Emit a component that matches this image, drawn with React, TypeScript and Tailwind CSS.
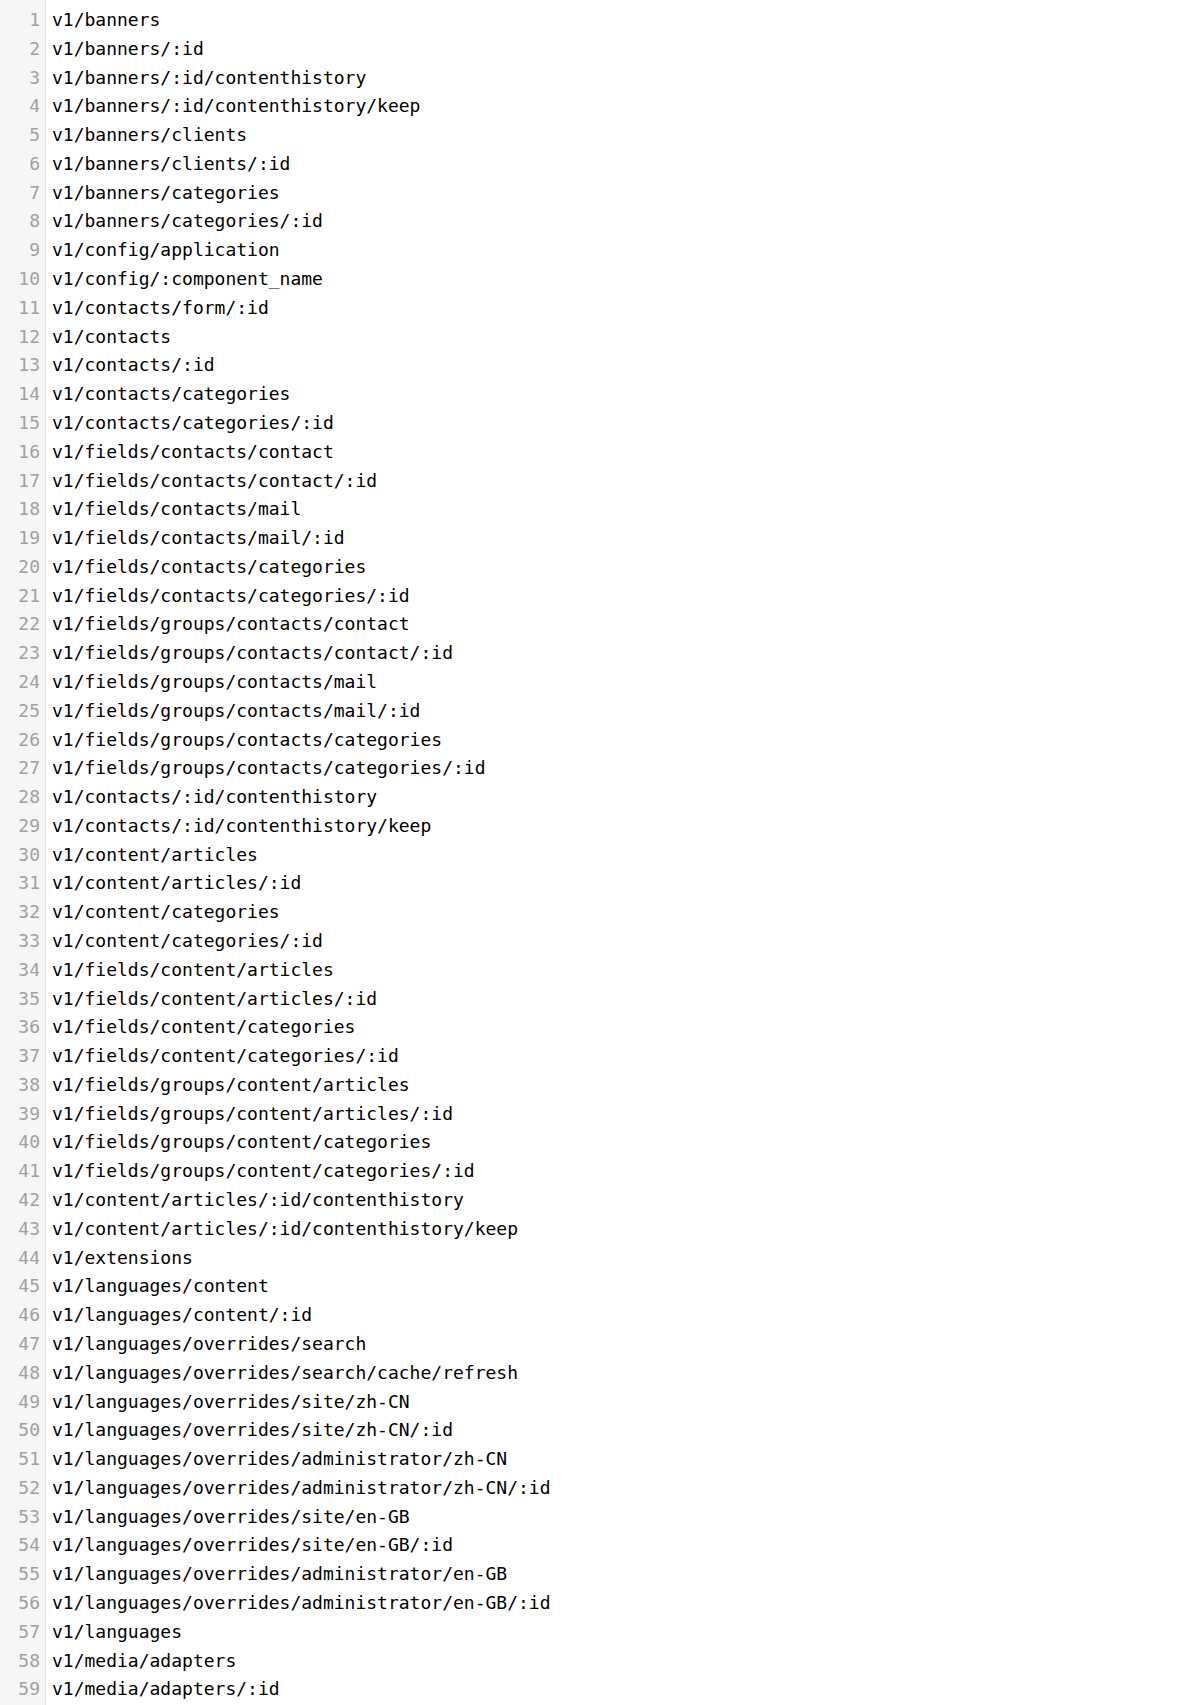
const lines = [
  "v1/banners",
  "v1/banners/:id",
  "v1/banners/:id/contenthistory",
  "v1/banners/:id/contenthistory/keep",
  "v1/banners/clients",
  "v1/banners/clients/:id",
  "v1/banners/categories",
  "v1/banners/categories/:id",
  "v1/config/application",
  "v1/config/:component_name",
  "v1/contacts/form/:id",
  "v1/contacts",
  "v1/contacts/:id",
  "v1/contacts/categories",
  "v1/contacts/categories/:id",
  "v1/fields/contacts/contact",
  "v1/fields/contacts/contact/:id",
  "v1/fields/contacts/mail",
  "v1/fields/contacts/mail/:id",
  "v1/fields/contacts/categories",
  "v1/fields/contacts/categories/:id",
  "v1/fields/groups/contacts/contact",
  "v1/fields/groups/contacts/contact/:id",
  "v1/fields/groups/contacts/mail",
  "v1/fields/groups/contacts/mail/:id",
  "v1/fields/groups/contacts/categories",
  "v1/fields/groups/contacts/categories/:id",
  "v1/contacts/:id/contenthistory",
  "v1/contacts/:id/contenthistory/keep",
  "v1/content/articles",
  "v1/content/articles/:id",
  "v1/content/categories",
  "v1/content/categories/:id",
  "v1/fields/content/articles",
  "v1/fields/content/articles/:id",
  "v1/fields/content/categories",
  "v1/fields/content/categories/:id",
  "v1/fields/groups/content/articles",
  "v1/fields/groups/content/articles/:id",
  "v1/fields/groups/content/categories",
  "v1/fields/groups/content/categories/:id",
  "v1/content/articles/:id/contenthistory",
  "v1/content/articles/:id/contenthistory/keep",
  "v1/extensions",
  "v1/languages/content",
  "v1/languages/content/:id",
  "v1/languages/overrides/search",
  "v1/languages/overrides/search/cache/refresh",
  "v1/languages/overrides/site/zh-CN",
  "v1/languages/overrides/site/zh-CN/:id",
  "v1/languages/overrides/administrator/zh-CN",
  "v1/languages/overrides/administrator/zh-CN/:id",
  "v1/languages/overrides/site/en-GB",
  "v1/languages/overrides/site/en-GB/:id",
  "v1/languages/overrides/administrator/en-GB",
  "v1/languages/overrides/administrator/en-GB/:id",
  "v1/languages",
  "v1/media/adapters",
  "v1/media/adapters/:id",
];

export default function App() {
  return (
    <div className="flex min-h-[1705px] bg-white font-['DejaVu_Sans_Mono',monospace] text-[18px] leading-[28.78px]">
      {/* gutter */}
      <div className="flex w-[46px] flex-col border-r border-[#e4e4e4] bg-[#f6f6f6] pt-[6px] pr-[5px] text-right text-[#a0a0a0]">
        {lines.map((_, i) => (
          <div key={i}>{i + 1}</div>
        ))}
      </div>
      <div className="flex flex-col pt-[6px] pl-[6px] text-black">
        {lines.map((line, i) => (
          <div key={i} className="whitespace-pre">
            {line}
          </div>
        ))}
      </div>
    </div>
  );
}
